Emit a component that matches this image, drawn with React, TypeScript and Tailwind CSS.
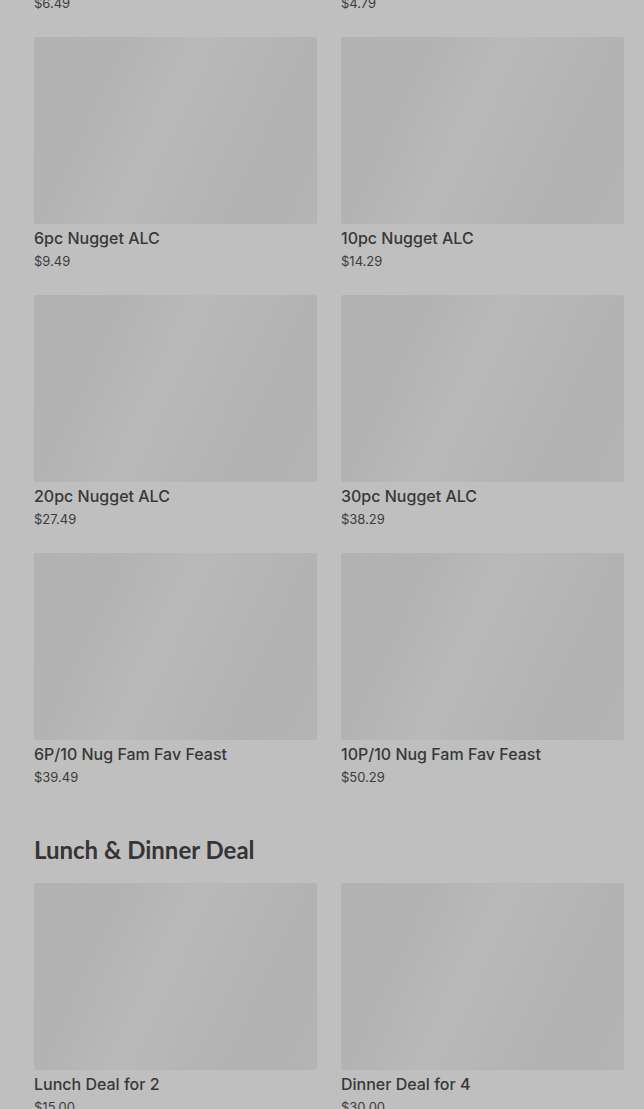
const rows: { title: string; price: string }[][] = [
  [
    { title: "6pc Nugget ALC", price: "$9.49" },
    { title: "10pc Nugget ALC", price: "$14.29" },
  ],
  [
    { title: "20pc Nugget ALC", price: "$27.49" },
    { title: "30pc Nugget ALC", price: "$38.29" },
  ],
  [
    { title: "6P/10 Nug Fam Fav Feast", price: "$39.49" },
    { title: "10P/10 Nug Fam Fav Feast", price: "$50.29" },
  ],
];

const deals = [
  { title: "Lunch Deal for 2", price: "$15.00" },
  { title: "Dinner Deal for 4", price: "$30.00" },
];

// Loading placeholder with the diagonal shimmer band.
function Placeholder() {
  return (
    <div className="h-[187px] w-full rounded-[2px] bg-[linear-gradient(115deg,#b2b2b2_0%,#b3b3b3_25%,#b9b9b9_45%,#b6b6b6_60%,#b2b2b2_80%,#b4b4b4_100%)]" />
  );
}

function ItemCard({ title, price }: { title: string; price: string }) {
  return (
    <div className="flex flex-col">
      <Placeholder />
      <div className="mt-1 text-[16px] leading-5 font-medium text-[#383838]">{title}</div>
      <div className="mt-1 text-[13px] leading-[18px] text-[#3c3c3c]">{price}</div>
    </div>
  );
}

export default function App() {
  return (
    <div
      className="h-[1109px] overflow-hidden bg-[#bfbfbf] pl-[34px] pr-[20px]"
      style={{ fontFamily: "Inter, 'Noto Sans', sans-serif" }}
    >
      {/* tail of the previous row */}
      <div className="-mt-[6px] grid grid-cols-2 gap-x-6 text-[13px] leading-[18px] text-[#3c3c3c]">
        <div>$6.49</div>
        <div>$4.79</div>
      </div>

      <div className="mt-[25px] flex flex-col gap-[25px]">
        {rows.map((r, i) => (
          <div key={i} className="grid grid-cols-2 gap-x-6">
            {r.map((it) => (
              <ItemCard key={it.title} {...it} />
            ))}
          </div>
        ))}
      </div>

      <h2
        className="mt-[50px] text-[24px] leading-7 font-bold text-[#353535]"
        style={{ fontFamily: "Lato, 'Noto Sans', sans-serif" }}
      >
        Lunch &amp; Dinner Deal
      </h2>

      <div className="mt-[19px] grid grid-cols-2 gap-x-6">
        {deals.map((it) => (
          <ItemCard key={it.title} {...it} />
        ))}
      </div>
    </div>
  );
}
